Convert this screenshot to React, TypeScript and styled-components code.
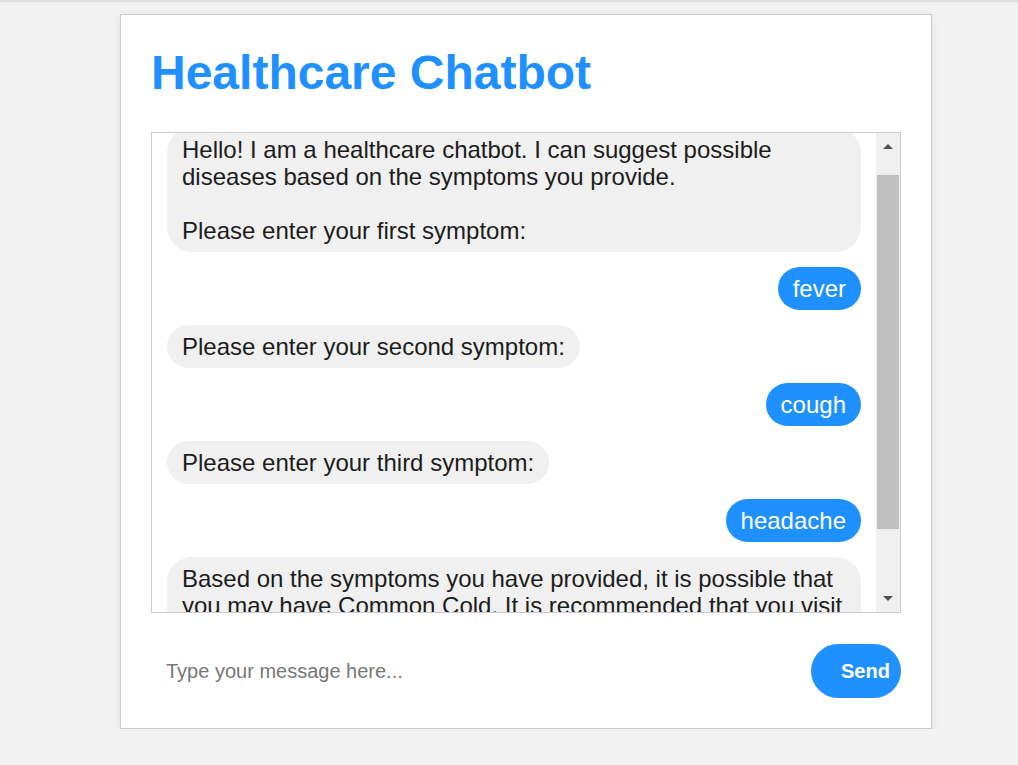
import React, { useEffect, useRef, useState } from "react";
import styled, { createGlobalStyle } from "styled-components";

const GlobalStyle = createGlobalStyle`
  html, body {
    margin: 0;
    padding: 0;
  }
  body {
    background: #f2f2f2;
    border-top: 2px solid #e0e0e0;
    font-family: "Liberation Sans", Arial, sans-serif;
  }
`;

const Card = styled.div`
  width: 750px;
  margin: 12px 0 0 120px;
  padding: 30px;
  background: #ffffff;
  border: 1px solid #cccccc;
  box-shadow: 0 2px 8px rgba(0, 0, 0, 0.08);
  display: flex;
  flex-direction: column;
`;

const Title = styled.h1`
  margin: 0 0 32px;
  font-size: 48px;
  font-weight: bold;
  color: #1e90ff;
  line-height: normal;
`;

const ChatBox = styled.div`
  box-sizing: border-box;
  height: 481px;
  border: 1px solid #cccccc;
  display: flex;
`;

const MessageList = styled.div`
  flex: 1;
  min-width: 0;
  padding: 15px;
  overflow-y: scroll;
  scrollbar-width: none;
  display: flex;
  flex-direction: column;
  gap: 15px;

  &::-webkit-scrollbar {
    display: none;
  }
`;

const ScrollBar = styled.div`
  flex: none;
  width: 24px;
  background: #f0f0f0;
  display: flex;
  flex-direction: column;
`;

const ScrollButton = styled.div`
  flex: none;
  height: 24px;
  display: flex;
  align-items: center;
  justify-content: center;
  color: #505050;
`;

const Track = styled.div`
  flex: 1;
  display: flex;
  flex-direction: column;
  padding: 0 1px;
`;

const Thumb = styled.div`
  flex: none;
  background: #c0c0c0;
`;

const Bubble = styled.div<{ $user?: boolean }>`
  flex: none;
  box-sizing: border-box;
  max-width: 100%;
  align-self: ${(p) => (p.$user ? "flex-end" : "flex-start")};
  padding: 8px 15px;
  border-radius: 25px;
  font-size: 24px;
  line-height: 27px;
  white-space: pre-wrap;
  background: ${(p) => (p.$user ? "#1e90ff" : "#f0f0f0")};
  color: ${(p) => (p.$user ? "#ffffff" : "#1c1c1c")};
`;

const InputRow = styled.div`
  display: flex;
  align-items: center;
  margin-top: 31px;
`;

const MessageInput = styled.input`
  flex: 1;
  min-width: 0;
  border: none;
  outline: none;
  padding: 15px;
  font-family: "Liberation Sans", Arial, sans-serif;
  font-size: 20px;
  color: #222;
  background: transparent;

  &::placeholder {
    color: #777777;
  }
`;

const SendButton = styled.button`
  flex: none;
  width: 90px;
  box-sizing: border-box;
  padding: 15px 11px 15px 30px;
  border: none;
  border-radius: 27px;
  background: #1e90ff;
  color: #ffffff;
  font-family: "Liberation Sans", Arial, sans-serif;
  font-size: 20px;
  font-weight: bold;
  line-height: 24px;
  text-align: left;
  cursor: pointer;
`;

const Arrow = ({ down }: { down?: boolean }) => (
  <svg width="10" height="5" viewBox="0 0 10 5" style={{ marginTop: down ? -4 : 3 }}>
    <polygon points={down ? "0,0 10,0 5,5" : "5,0 10,5 0,5"} fill="currentColor" />
  </svg>
);

const messages: { text: string; user?: boolean }[] = [
  {
    text:
      "Hello! I am a healthcare chatbot. I can suggest possible diseases based on the symptoms you provide.\n\nPlease enter your first symptom:",
  },
  { text: "fever", user: true },
  { text: "Please enter your second symptom:" },
  { text: "cough", user: true },
  { text: "Please enter your third symptom:" },
  { text: "headache", user: true },
  {
    text:
      "Based on the symptoms you have provided, it is possible that you may have Common Cold. It is recommended that you visit a doctor for a proper diagnosis and treatment. This chatbot is not a substitute for professional medical advice.",
  },
];

export default function App() {
  const listRef = useRef<HTMLDivElement>(null);
  const trackRef = useRef<HTMLDivElement>(null);
  const [thumb, setThumb] = useState({ top: 19, height: 357 });

  useEffect(() => {
    const list = listRef.current;
    const track = trackRef.current;
    if (!list || !track) return;
    list.scrollTop = 20;
    const update = () => {
      const trackLen = track.clientHeight;
      const ratio = list.clientHeight / list.scrollHeight;
      setThumb({
        top: (list.scrollTop / list.scrollHeight) * trackLen + 3,
        height: Math.max(20, ratio * trackLen),
      });
    };
    update();
    list.addEventListener("scroll", update);
    return () => list.removeEventListener("scroll", update);
  }, []);

  return (
    <>
      <GlobalStyle />
      <Card>
        <Title>Healthcare Chatbot</Title>
        <ChatBox>
          <MessageList ref={listRef}>
            {messages.map((m, i) => (
              <Bubble key={i} $user={m.user}>
                {m.text}
              </Bubble>
            ))}
          </MessageList>
          <ScrollBar>
            <ScrollButton>
              <Arrow />
            </ScrollButton>
            <Track ref={trackRef}>
              <Thumb style={{ marginTop: thumb.top, height: thumb.height }} />
            </Track>
            <ScrollButton>
              <Arrow down />
            </ScrollButton>
          </ScrollBar>
        </ChatBox>
        <InputRow>
          <MessageInput placeholder="Type your message here..." />
          <SendButton>Send</SendButton>
        </InputRow>
      </Card>
    </>
  );
}
